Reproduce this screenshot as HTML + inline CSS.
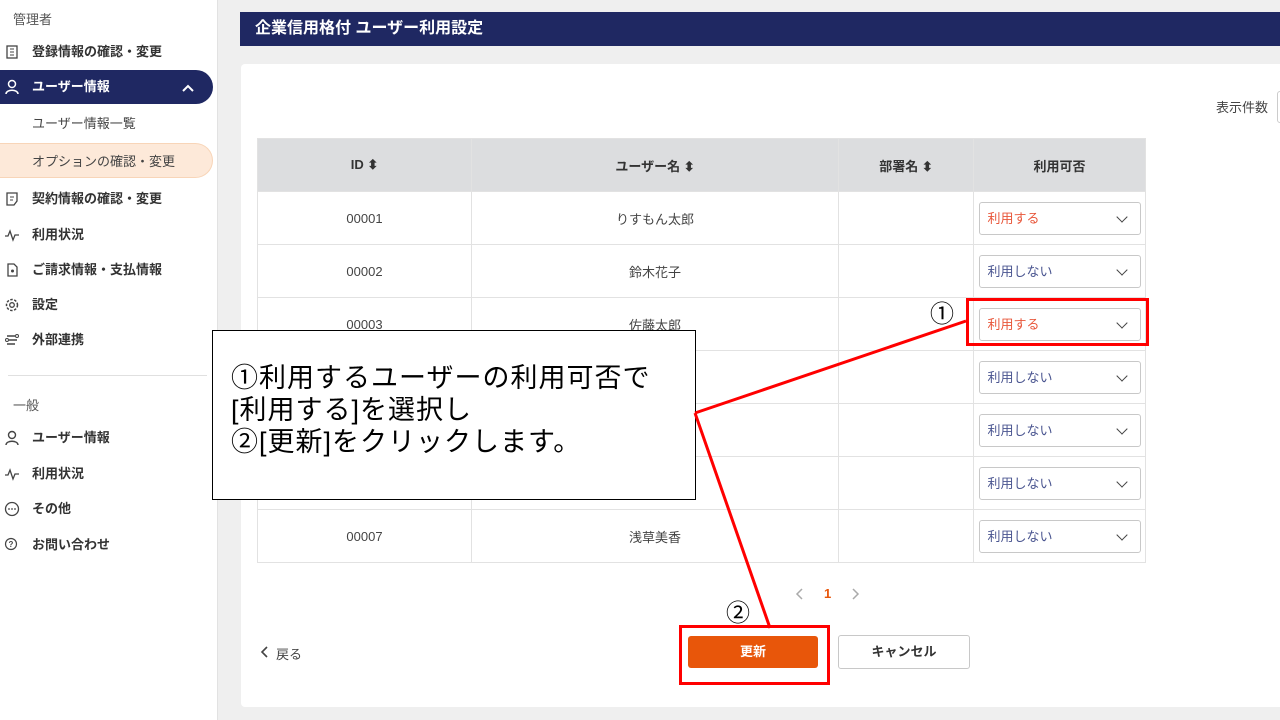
<!DOCTYPE html>
<html><head><meta charset="utf-8"><style>
*{box-sizing:border-box;margin:0;padding:0}
body{width:1280px;height:720px;overflow:hidden;background:#efefef;font-family:"Liberation Sans","Noto Sans CJK JP",sans-serif;color:#333;position:relative}
.abs{position:absolute}
#side{left:0;top:0;width:218px;height:720px;background:#fff;border-right:1px solid #e2e2e2}
.it{position:absolute;left:0;font-size:13px;font-weight:bold;color:#333;height:20px;line-height:20px}
.it svg{position:absolute;left:4px;top:2px}
.it span{position:absolute;left:32px;white-space:nowrap}
.sec{position:absolute;left:13px;font-size:13px;color:#555}
table{border-collapse:collapse}
td,th{border:1px solid #e2e2e2;text-align:center;font-size:13px}
th{background:#dcdddf;height:53px;font-weight:bold;color:#333}
td{height:53px;color:#444;background:#fff}
.sel{width:162px;height:33px;margin:0 auto;border:1px solid #c8c8c8;border-radius:3px;text-align:left;padding-left:8px;line-height:31px;font-size:13px;position:relative}
.sel:after{content:"";position:absolute;right:14px;top:10px;width:7px;height:7px;border-right:1.6px solid #444;border-bottom:1.6px solid #444;transform:rotate(45deg)}
.r{color:#e8563a}.b{color:#4a5590}
</style></head><body>
<div id="side" class="abs">
<div class="sec" style="top:9px">管理者</div>
<div class="it" style="top:42px"><svg width="16" height="16"><rect x="3" y="2" width="10" height="12" fill="none" stroke="#444" stroke-width="1.3"/><path d="M6 5h4M6 8h4M6 11h4" stroke="#444"/></svg><span>登録情報の確認・変更</span></div>
<div class="abs" style="left:0;top:70px;width:213px;height:34px;background:#1f2862;border-radius:0 17px 17px 0"></div>
<div class="it" style="top:77px;color:#fff"><svg width="16" height="16"><circle cx="8" cy="5" r="3.5" fill="none" stroke="#fff" stroke-width="1.5"/><path d="M2 15c0-5 12-5 12 0" fill="none" stroke="#fff" stroke-width="1.5"/></svg><span>ユーザー情報</span></div>
<svg class="abs" style="left:181px;top:83px" width="14" height="10"><path d="M2 8l5-5 5 5" fill="none" stroke="#fff" stroke-width="2"/></svg>
<div class="abs" style="left:32px;top:113px;font-size:13px;color:#444">ユーザー情報一覧</div>
<div class="abs" style="left:0;top:143px;width:213px;height:35px;background:#fde9d9;border:1px solid #f8d5b8;border-left:0;border-radius:0 18px 18px 0"></div>
<div class="abs" style="left:32px;top:151px;font-size:13px;color:#444">オプションの確認・変更</div>
<div class="it" style="top:189px"><svg width="16" height="16"><path d="M3 2h10v8l-3 4H3z" fill="none" stroke="#444" stroke-width="1.3"/><path d="M6 6h4M6 9h3" stroke="#444"/></svg><span>契約情報の確認・変更</span></div>
<div class="it" style="top:225px"><svg width="16" height="16"><path d="M1 9h3l2-5 3 9 2-5h4" fill="none" stroke="#444" stroke-width="1.3"/></svg><span>利用状況</span></div>
<div class="it" style="top:260px"><svg width="16" height="16"><path d="M4 2h6l3 3v9H4z" fill="none" stroke="#444" stroke-width="1.3"/><circle cx="8.5" cy="9" r="1.5" fill="#444"/></svg><span>ご請求情報・支払情報</span></div>
<div class="it" style="top:295px"><svg width="16" height="16"><circle cx="8" cy="8" r="5.5" fill="none" stroke="#444" stroke-width="1.5" stroke-dasharray="2.5 1.5"/><circle cx="8" cy="8" r="2.3" fill="none" stroke="#444" stroke-width="1.3"/></svg><span>設定</span></div>
<div class="it" style="top:330px"><svg width="16" height="16"><path d="M3 4h8M5 8h8M3 12h8" stroke="#444" stroke-width="1.5"/><circle cx="13" cy="4" r="1.5" fill="none" stroke="#444"/><circle cx="3" cy="8" r="1.5" fill="none" stroke="#444"/></svg><span>外部連携</span></div>
<div class="abs" style="left:8px;top:375px;width:199px;height:1px;background:#e0e0e0"></div>
<div class="sec" style="top:395px">一般</div>
<div class="it" style="top:428px"><svg width="16" height="16"><circle cx="8" cy="5" r="3.5" fill="none" stroke="#444" stroke-width="1.4"/><path d="M2 15c0-5 12-5 12 0" fill="none" stroke="#444" stroke-width="1.4"/></svg><span>ユーザー情報</span></div>
<div class="it" style="top:464px"><svg width="16" height="16"><path d="M1 9h3l2-5 3 9 2-5h4" fill="none" stroke="#444" stroke-width="1.3"/></svg><span>利用状況</span></div>
<div class="it" style="top:499px"><svg width="16" height="16"><circle cx="8" cy="8" r="6.5" fill="none" stroke="#444" stroke-width="1.3"/><circle cx="5" cy="8" r=".9" fill="#444"/><circle cx="8" cy="8" r=".9" fill="#444"/><circle cx="11" cy="8" r=".9" fill="#444"/></svg><span>その他</span></div>
<div class="it" style="top:535px"><svg width="16" height="16"><circle cx="7" cy="7" r="5.5" fill="none" stroke="#444" stroke-width="1.2"/><text x="4.5" y="10" font-size="8" fill="#444">?</text></svg><span>お問い合わせ</span></div>
</div>

<div class="abs" style="left:240px;top:12px;width:1040px;height:34px;background:#1f2862;color:#fff;font-weight:bold;font-size:16px;line-height:34px;padding-left:15px">企業信用格付 ユーザー利用設定</div>
<div class="abs" style="left:241px;top:64px;width:1039px;height:643px;background:#fff;border-radius:4px 0 0 4px"></div>
<div class="abs" style="left:1216px;top:97px;font-size:13px;color:#444">表示件数</div>
<div class="abs" style="left:1277px;top:91px;width:10px;height:32px;border:1px solid #ccc;border-radius:3px"></div>

<table class="abs" style="left:257px;top:138px;width:889px">
<tr><th style="width:214px">ID ⬍</th><th style="width:367px">ユーザー名 ⬍</th><th style="width:135px">部署名 ⬍</th><th>利用可否</th></tr>
<tr><td>00001</td><td>りすもん太郎</td><td></td><td><div class="sel r">利用する</div></td></tr>
<tr><td>00002</td><td>鈴木花子</td><td></td><td><div class="sel b">利用しない</div></td></tr>
<tr><td>00003</td><td>佐藤太郎</td><td></td><td><div class="sel r">利用する</div></td></tr>
<tr><td>00004</td><td>山田次郎</td><td></td><td><div class="sel b">利用しない</div></td></tr>
<tr><td>00005</td><td>田中三郎</td><td></td><td><div class="sel b">利用しない</div></td></tr>
<tr><td>00006</td><td>高橋四郎</td><td></td><td><div class="sel b">利用しない</div></td></tr>
<tr><td>00007</td><td>浅草美香</td><td></td><td><div class="sel b">利用しない</div></td></tr>
</table>

<svg class="abs" style="left:793px;top:587px" width="12" height="14"><path d="M9 2L4 7l5 5" fill="none" stroke="#aaa" stroke-width="1.5"/></svg>
<div class="abs" style="left:824px;top:586px;font-size:13px;color:#e8560a;font-weight:bold">1</div>
<svg class="abs" style="left:850px;top:587px" width="12" height="14"><path d="M3 2l5 5-5 5" fill="none" stroke="#aaa" stroke-width="1.5"/></svg>
<svg class="abs" style="left:258px;top:645px" width="12" height="14"><path d="M9 2L4 7l5 5" fill="none" stroke="#444" stroke-width="1.6"/></svg>
<div class="abs" style="left:276px;top:644px;font-size:13px;color:#444">戻る</div>
<div class="abs" style="left:688px;top:636px;width:130px;height:32px;background:#e8560a;border-radius:3px;color:#fff;font-weight:bold;font-size:13px;text-align:center;line-height:32px">更新</div>
<div class="abs" style="left:838px;top:635px;width:132px;height:34px;border:1px solid #c8c8c8;border-radius:3px;font-weight:bold;font-size:13px;text-align:center;line-height:32px;color:#333;background:#fff">キャンセル</div>

<div class="abs" style="left:212px;top:330px;width:484px;height:170px;background:#fff;border:1px solid #000;font-size:27px;letter-spacing:1px;line-height:32px;color:#000;padding:31px 0 0 18px;white-space:nowrap">①利用するユーザーの利用可否で<br>[利用する]を選択し<br>②[更新]をクリックします。</div>
<div class="abs" style="left:966px;top:298px;width:183px;height:48px;border:3px solid #f00"></div>
<div class="abs" style="left:679px;top:625px;width:151px;height:60px;border:3px solid #f00"></div>
<svg class="abs" style="left:0;top:0" width="1280" height="720"><path d="M695 413L966 321M695 413L770 628" stroke="#f00" stroke-width="3" fill="none"/></svg>
<div class="abs" style="left:930px;top:294px;font-size:24px;color:#000">①</div>
<div class="abs" style="left:726px;top:593px;font-size:24px;color:#000">②</div>
</body></html>
